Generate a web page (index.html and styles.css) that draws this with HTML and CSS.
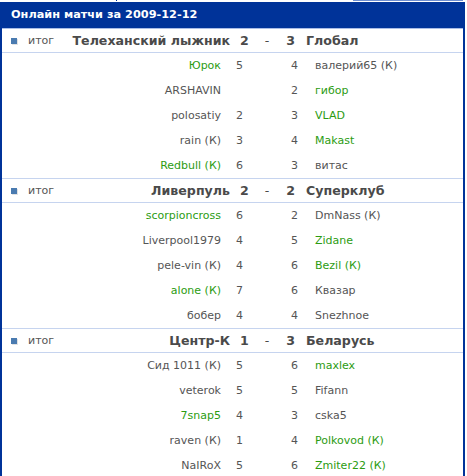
FILE: index.html
```html
<!DOCTYPE html>
<html>
<head>
<meta charset="utf-8">
<link rel="stylesheet" href="styles.css">
</head>
<body>
<div class="topline"><span class="tab-a"></span><span class="tab-b"></span></div>
<div class="box">
  <div class="title">Онлайн матчи за 2009-12-12</div>
  <div class="match">
    <div class="mhead">
      <div class="home"><span class="bullet"></span><span class="res">итог</span><span class="tname">Телеханский лыжник</span></div>
      <div class="sc1">2</div><div class="dash">-</div><div class="sc2">3</div>
      <div class="away">Глобал</div>
    </div>
    <div class="players">
      <div class="prow"><div class="pl g">Юрок</div><div class="s1">5</div><div class="s2">4</div><div class="pr">валерий65 (К)</div></div>
      <div class="prow"><div class="pl">ARSHAVIN</div><div class="s1"></div><div class="s2">2</div><div class="pr g">гибор</div></div>
      <div class="prow"><div class="pl">polosatiy</div><div class="s1">2</div><div class="s2">3</div><div class="pr g">VLAD</div></div>
      <div class="prow"><div class="pl">rain (К)</div><div class="s1">3</div><div class="s2">4</div><div class="pr g">Makast</div></div>
      <div class="prow"><div class="pl g">Redbull (К)</div><div class="s1">6</div><div class="s2">3</div><div class="pr">витас</div></div>
    </div>
  </div>
  <div class="match">
    <div class="mhead">
      <div class="home"><span class="bullet"></span><span class="res">итог</span><span class="tname">Ливерпуль</span></div>
      <div class="sc1">2</div><div class="dash">-</div><div class="sc2">2</div>
      <div class="away">Суперклуб</div>
    </div>
    <div class="players">
      <div class="prow"><div class="pl g">scorpioncross</div><div class="s1">6</div><div class="s2">2</div><div class="pr">DmNass (К)</div></div>
      <div class="prow"><div class="pl">Liverpool1979</div><div class="s1">4</div><div class="s2">5</div><div class="pr g">Zidane</div></div>
      <div class="prow"><div class="pl">pele-vin (К)</div><div class="s1">4</div><div class="s2">6</div><div class="pr g">Bezil (К)</div></div>
      <div class="prow"><div class="pl g">alone (К)</div><div class="s1">7</div><div class="s2">6</div><div class="pr">Квазар</div></div>
      <div class="prow"><div class="pl">бобер</div><div class="s1">4</div><div class="s2">4</div><div class="pr">Snezhnoe</div></div>
    </div>
  </div>
  <div class="match">
    <div class="mhead">
      <div class="home"><span class="bullet"></span><span class="res">итог</span><span class="tname">Центр-К</span></div>
      <div class="sc1">1</div><div class="dash">-</div><div class="sc2">3</div>
      <div class="away">Беларусь</div>
    </div>
    <div class="players">
      <div class="prow"><div class="pl">Сид 1011 (К)</div><div class="s1">5</div><div class="s2">6</div><div class="pr g">maxlex</div></div>
      <div class="prow"><div class="pl">veterok</div><div class="s1">5</div><div class="s2">5</div><div class="pr">Fifann</div></div>
      <div class="prow"><div class="pl g">7snap5</div><div class="s1">4</div><div class="s2">3</div><div class="pr">cska5</div></div>
      <div class="prow"><div class="pl">raven (К)</div><div class="s1">1</div><div class="s2">4</div><div class="pr g">Polkovod (К)</div></div>
      <div class="prow"><div class="pl">NaIRoX</div><div class="s1">5</div><div class="s2">6</div><div class="pr g">Zmiter22 (К)</div></div>
    </div>
  </div>
</div>
</body>
</html>
```
FILE: styles.css
```css
html, body {
  margin: 0;
  padding: 0;
  background: #ffffff;
  overflow: hidden;
}
body {
  font-family: "DejaVu Sans", Verdana, sans-serif;
  font-size: 11px;
  color: #555555;
}
.topline {
  height: 2px;
  display: flex;
  width: 465px;
}
.tab-a {
  width: 116px;
  height: 1px;
  background: #ffffff;
  border-right: 1px solid #003399;
}
.tab-b {
  margin-left: 236px;
  width: 110px;
  height: 1px;
  background: #6f8fd0;
}
.box {
  width: 461px;
  border-left: 2px solid #003399;
  border-right: 2px solid #003399;
  height: 474px;
}
.title {
  background: #003399;
  color: #ffffff;
  font-weight: bold;
  font-size: 11.3px;
  height: 26px;
  line-height: 26px;
  padding-left: 9px;
  border-bottom: 1px solid #a9bde6;
}
.mhead {
  display: grid;
  grid-template-columns: 228px 20px 34px 11px 1fr;
  height: 23px;
  line-height: 23px;
  border-bottom: 1px solid #c6d4ef;
  font-weight: bold;
  font-size: 12.6px;
  color: #4a4a4a;
}
.home {
  display: flex;
  align-items: center;
}
.bullet {
  width: 6px;
  height: 6px;
  background: #4a7bb0;
  margin-left: 9px;
  box-shadow: 1px 1px 0 #e2e2e2;
}
.res {
  font-weight: normal;
  font-size: 11px;
  color: #555555;
  margin-left: 11px;
}
.tname {
  flex: 1;
  text-align: right;
}
.sc1 {
  padding-left: 10px;
}
.dash {
  text-align: center;
  font-weight: normal;
}
.sc2 {
  text-align: right;
}
.away {
  padding-left: 11px;
}
.players {
  border-bottom: 1px solid #c6d4ef;
}
.prow {
  display: grid;
  grid-template-columns: 219px 25px 52px 1fr;
  height: 25px;
  line-height: 25px;
}
.pl {
  text-align: right;
}
.s1 {
  padding-left: 15px;
}
.s2 {
  text-align: right;
}
.pr {
  padding-left: 17px;
}
.g {
  color: #2c9c12;
}
```
